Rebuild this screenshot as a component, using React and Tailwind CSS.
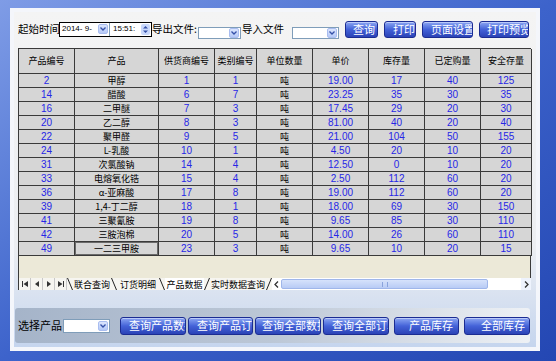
import React from 'react'

const rows = [
  ['2', '甲醇', '1', '1', '19.00', '17', '40', '125'],
  ['14', '醋酸', '6', '7', '23.25', '35', '30', '35'],
  ['16', '二甲醚', '7', '3', '17.45', '29', '20', '30'],
  ['20', '乙二醇', '8', '3', '81.00', '40', '20', '40'],
  ['22', '聚甲醛', '9', '5', '21.00', '104', '50', '155'],
  ['24', 'L-乳酸', '10', '1', '4.50', '20', '10', '20'],
  ['31', '次氯酸钠', '14', '4', '12.50', '0', '10', '20'],
  ['33', '电熔氧化锆', '15', '4', '2.50', '112', '60', '20'],
  ['36', 'α-亚麻酸', '17', '8', '19.00', '112', '60', '20'],
  ['39', '1,4-丁二醇', '18', '1', '18.00', '69', '30', '150'],
  ['41', '三聚氰胺', '19', '8', '9.65', '85', '30', '110'],
  ['42', '三胺泡棉', '20', '5', '14.00', '26', '60', '110'],
  ['49', '一二三甲胺', '23', '3', '9.65', '10', '20', '15'],
]

const heads = ['产品编号', '产品', '供货商编号', '类别编号', '单位数量', '单价', '库存量', '已定购量', '安全存量']

const cols = 'grid grid-cols-[56px_84px_56px_42px_56px_56px_56px_56px_51px]'
const cjk = { fontFamily: '"Noto Sans CJK SC", "Liberation Sans", sans-serif' }
const num = { fontFamily: '"Liberation Sans", "Noto Sans CJK SC", sans-serif' }

function Btn({ children, w, pl }) {
  return (
    <div
      className={`h-[17px] shrink-0 overflow-hidden whitespace-nowrap rounded-[3px] border border-[#1b2c92] bg-linear-to-b from-[#8ea6f2] via-[#4462d8] to-[#2b43b6] text-[11px] leading-[15px] text-white shadow-[inset_0_1px_0_#b9c9fa] ${w} ${pl}`}
    >
      {children}
    </div>
  )
}

function DropBtn() {
  return (
    <div className="flex h-[10px] w-[10px] items-center justify-center rounded-[2px] border border-[#a9bdf0] bg-linear-to-b from-[#dbe5fd] to-[#b5c9f7]">
      <svg width="6" height="4" viewBox="0 0 6 4">
        <path d="M0.5 0.5 L3 3 L5.5 0.5" fill="none" stroke="#3450a8" strokeWidth="1.3" />
      </svg>
    </div>
  )
}

function Select({ w }) {
  return (
    <div className={`flex h-[12px] items-center justify-end border border-[#7f9db9] bg-white pr-[1px] ${w}`}>
      <DropBtn />
    </div>
  )
}

function Sep({ dir }) {
  return (
    <svg width="6" height="12" viewBox="0 0 6 12" className="shrink-0">
      {dir === 'b' ? (
        <path d="M0.5 0 L5.5 12" stroke="#222" strokeWidth="1" />
      ) : (
        <path d="M5.5 0 L0.5 12" stroke="#222" strokeWidth="1" />
      )}
    </svg>
  )
}

function Nav({ d }) {
  return (
    <div className="flex h-[12px] w-[12px] items-center justify-center border-r border-[#c8c8c8]">
      <svg width="6" height="6" viewBox="0 0 6 6">
        <path d={d} fill="#333" />
      </svg>
    </div>
  )
}

export default function App() {
  return (
    <div className="h-[361px] w-[556px] bg-linear-to-br from-[#7f9ce6] via-[#3d63cb] to-[#2447b3] pb-[10px] pl-[10px] pr-[16px] pt-[8px]" style={cjk}>
      <div className="flex h-full flex-col border-4 border-[#f4f6fb] bg-linear-to-b from-[#f4f4f4] via-[#eceef2] via-70% to-[#c5d5ee]">
        {/* top bar */}
        <div className="mt-[8px] flex h-[18px] items-center pl-[4px] text-[10.5px] text-black">
          <span className="w-[41px] shrink-0 whitespace-nowrap">起始时间</span>
          <div className="flex h-[15px] w-[93px] shrink-0 border border-black bg-white">
            <div className="flex w-[50px] items-center justify-between border-r border-[#7f9db9] pl-[2px] pr-[1px]">
              <span className="text-[8px] leading-none" style={num}>2014- 9-</span>
              <DropBtn />
            </div>
            <div className="flex flex-1 items-center justify-between pl-[3px] pr-[1px]">
              <span className="text-[8px] leading-none" style={num}>15:51:</span>
              <div className="flex h-[11px] w-[9px] flex-col items-center justify-center rounded-[2px] bg-[#c9d8fb]">
                <svg width="5" height="9" viewBox="0 0 5 9">
                  <path d="M0 3.5 L2.5 1 L5 3.5 Z M0 5.5 L2.5 8 L5 5.5 Z" fill="#3450a8" />
                </svg>
              </div>
            </div>
          </div>
          <span className="w-[46px] shrink-0 whitespace-nowrap">导出文件:</span>
          <div className="mt-[7px]"><Select w="w-[43px]" /></div>
          <span className="w-[51px] shrink-0 whitespace-nowrap pl-[1px]">导入文件</span>
          <div className="mt-[7px]"><Select w="w-[47px]" /></div>
          <div className="ml-[6px] flex gap-[6px]">
            <Btn w="w-[33px]" pl="pl-[7px]">查询</Btn>
            <Btn w="w-[32px]" pl="pl-[8px]">打印</Btn>
            <Btn w="w-[51px]" pl="pl-[8px]">页面设置</Btn>
            <Btn w="w-[50px]" pl="pl-[7px]">打印预览</Btn>
          </div>
        </div>

        {/* grid */}
        <div className="ml-[4px] mt-[10px] flex w-[513px] flex-col border-l border-t border-[#3a3a3a] bg-[#ece9d8]">
          <div className={cols}>
            {heads.map(h => (
              <div key={h} className="flex h-[25px] items-center justify-center whitespace-nowrap border-b border-r border-[#3a3a3a] bg-[#d6d6d6] text-[9px] text-black">
                {h}
              </div>
            ))}
          </div>
          {rows.map((r, i) => (
            <div key={r[0]} className={cols}>
              {[r[0], r[1], r[2], r[3], '吨', r[4], r[5], r[6], r[7]].map((c, j) => {
                const isText = j === 1 || j === 4
                const focus = i === rows.length - 1 && j === 1
                return (
                  <div
                    key={j}
                    className={`flex h-[14px] items-center justify-center whitespace-nowrap border-b border-r border-[#3a3a3a] bg-[#d6d6d6] ${isText ? 'text-[9px] text-black' : 'text-[10px] text-[#2626e6]'} ${focus ? 'shadow-[inset_0_0_0_1px_#6a6a6a]' : ''}`}
                    style={isText ? cjk : num}
                  >
                    {c}
                  </div>
                )
              })}
            </div>
          ))}
          <div className="h-[22px] border-r border-[#3a3a3a]" />
          {/* tab bar */}
          <div className="flex h-[12px] items-center bg-[#f6f5f0] text-[9px] leading-none">
            <Nav d="M0 0 H1 V6 H0 Z M6 0 V6 L1.5 3 Z" />
            <Nav d="M5 0 V6 L1 3 Z" />
            <Nav d="M1 0 V6 L5 3 Z" />
            <Nav d="M0 0 V6 L4.5 3 Z M5 0 H6 V6 H5 Z" />
            <Sep dir="b" />
            <span className="w-[38px] text-center">联合查询</span>
            <Sep dir="b" />
            <span className="w-[42px] text-center">订货明细</span>
            <Sep dir="b" />
            <span className="h-full w-[39px] bg-white pt-[1.5px] text-center">产品数据</span>
            <Sep dir="f" />
            <span className="w-[56px] text-center">实时数据查询</span>
            <Sep dir="f" />
            <div className="flex h-full flex-1 items-center bg-white">
              <div className="flex h-full w-[9px] items-center justify-center">
                <svg width="5" height="7" viewBox="0 0 5 7"><path d="M4 0.5 L1 3.5 L4 6.5" fill="none" stroke="#333" strokeWidth="1.3" /></svg>
              </div>
              <div className="flex h-[10px] w-[207px] items-center justify-center rounded-[2px] border border-[#9fb6ea] bg-linear-to-b from-[#d6e2fb] to-[#b8cbf5]">
                <div className="h-[5px] w-[6px] border-x border-[#8aa3dc]" />
              </div>
              <div className="flex-1" />
              <div className="flex h-full w-[10px] items-center justify-center bg-[#eef3fd]">
                <svg width="5" height="7" viewBox="0 0 5 7"><path d="M1 0.5 L4 3.5 L1 6.5" fill="none" stroke="#333" strokeWidth="1.3" /></svg>
              </div>
            </div>
          </div>
        </div>

        {/* bottom panel */}
        <div className="ml-[1px] mt-[18px] flex h-[35px] w-[515px] items-center rounded-[3px] bg-linear-to-r from-[#a5b4c9] via-[#bcc7d6] to-[#eef1f5] pl-[3px]">
          <span className="w-[45px] shrink-0 whitespace-nowrap text-[11px] text-black">选择产品</span>
          <div className="mt-[1px] flex h-[14px] w-[54px] items-center justify-end border border-[#7f9db9] bg-white pr-[1px]">
            <DropBtn />
          </div>
          <div className="ml-[10px] flex gap-[2px]">
            <Btn w="w-[66px] h-[18px]" pl="pl-[8px]">查询产品数据</Btn>
            <Btn w="w-[65px] h-[18px]" pl="pl-[8px]">查询产品订单</Btn>
            <Btn w="w-[66px] h-[18px]" pl="pl-[6px]">查询全部数据</Btn>
            <Btn w="w-[66px] h-[18px]" pl="pl-[8px]">查询全部订单</Btn>
            <div className="w-[1px]" />
            <Btn w="w-[65px] h-[18px]" pl="pl-[14px]">产品库存</Btn>
            <div className="w-[1px]" />
            <Btn w="w-[66px] h-[18px]" pl="pl-[16px]">全部库存</Btn>
          </div>
        </div>
      </div>
    </div>
  )
}
